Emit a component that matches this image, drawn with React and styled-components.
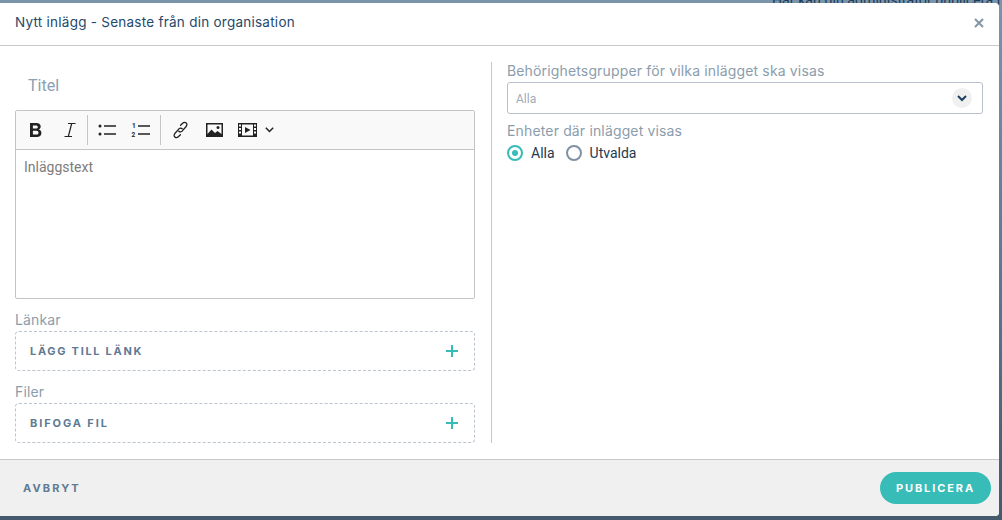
import React from 'react';
import styled, { createGlobalStyle } from 'styled-components';

const GlobalStyle = createGlobalStyle`
  html, body {
    margin: 0;
    padding: 0;
    height: 100%;
    overflow: hidden;
  }
  body {
    font-family: "Roboto", "Liberation Sans", sans-serif;
  }
`;

const Backdrop = styled.div`
  height: 520px;
  width: 1002px;
  overflow: hidden;
  background: linear-gradient(180deg, #7a94aa 0%, #5f7a90 50%, #44596c 100%);
`;

const BehindText = styled.div`
  padding-left: 772px;
  margin-top: -8px;
  height: 11px;
  font-size: 14.2px;
  line-height: 16px;
  white-space: nowrap;
  color: #1d3c58;
`;

const Modal = styled.div`
  position: absolute;
  left: 0;
  top: 3px;
  width: 999px;
  height: 513px;
  display: flex;
  flex-direction: column;
  background: #fff;
  border-radius: 0 4px 4px 0;
  overflow: hidden;
`;

const Header = styled.header`
  height: 42px;
  flex: none;
  display: flex;
  align-items: center;
  justify-content: space-between;
  padding: 0 13px 0 15px;
  border-bottom: 1px solid #c9c9c9;
`;

const Heading = styled.h1`
  margin: 0 0 4px;
  font-family: "Inter", sans-serif;
  font-size: 13.5px;
  font-weight: 400;
  letter-spacing: 0.25px;
  color: #24496a;
`;

const CloseButton = styled.button`
  border: 0;
  padding: 0 0 2px;
  background: none;
  display: flex;
  color: #8495a5;
`;

const Body = styled.div`
  flex: 1;
  min-height: 0;
  display: flex;
  padding: 16px 16px 16px 15px;
`;

const LeftColumn = styled.div`
  width: 460px;
  padding-right: 16px;
  border-right: 1px solid #c4c9ce;
`;

const RightColumn = styled.div`
  flex: 1;
  padding: 1px 0 0 15px;
`;

const TitleInput = styled.div`
  height: 46px;
  padding: 0 0 2px 13px;
  display: flex;
  align-items: center;
  font-size: 16px;
  color: #8aa0b4;
`;

const Editor = styled.div`
  height: 187px;
  border: 1px solid #c4c4c4;
  border-radius: 2px;
`;

const Toolbar = styled.div`
  height: 38px;
  display: flex;
  align-items: center;
  padding-left: 2px;
  background: #f9f9f9;
  border-bottom: 1px solid #c4c4c4;
`;

const ToolIcon = styled.span`
  width: ${p => p.$w}px;
  height: 38px;
  display: flex;
  align-items: center;
  justify-content: center;
  color: #222;
`;

const ToolDivider = styled.span`
  width: 1px;
  height: 30px;
  margin-left: ${p => p.$left || 0}px;
  background: #c4c4c4;
`;

const EditorText = styled.div`
  padding: 9px 8px;
  font-size: 14px;
  line-height: 17px;
  color: #7d7d7d;
`;

const FieldLabel = styled.div`
  font-family: "Inter", sans-serif;
  font-size: 14px;
  line-height: 16px;
  letter-spacing: 0.15px;
  color: #8b9dac;
  margin-top: ${p => p.$top || 0}px;
`;

const AddBox = styled.div`
  height: 38px;
  margin-top: 3px;
  display: flex;
  align-items: center;
  justify-content: space-between;
  padding: 0 15px 0 14px;
  border: 1px dashed #bcc5cd;
  border-radius: 4px;
`;

const ActionLabel = styled.span`
  font-family: "Inter", sans-serif;
  font-size: 11px;
  font-weight: 700;
  letter-spacing: ${p => p.$spacing || 1.7}px;
  color: #5f7a93;
`;

const PlusIcon = styled.svg`
  width: 14px;
  height: 14px;
  display: block;
`;

const Select = styled.div`
  height: 30px;
  margin-top: 3px;
  display: flex;
  align-items: center;
  justify-content: space-between;
  padding: 0 10px 0 8px;
  border: 1px solid #b5c0cb;
  border-radius: 3px;
`;

const SelectValue = styled.span`
  padding-top: 2px;
  font-size: 12px;
  color: #a0acb8;
`;

const SelectArrow = styled.span`
  width: 20px;
  height: 20px;
  border-radius: 50%;
  background: #f0f0f0;
  display: flex;
  align-items: center;
  justify-content: center;
`;

const RadioRow = styled.div`
  display: flex;
  align-items: center;
  gap: 11px;
  margin-top: 6px;
`;

const RadioOption = styled.label`
  display: flex;
  align-items: center;
  gap: 8px;
  font-size: 14px;
  line-height: 16px;
  color: #243a50;
`;

const RadioDot = styled.span`
  width: 12px;
  height: 12px;
  border-radius: 50%;
  border: 2px solid ${p => (p.$checked ? '#37bcb8' : '#7f91a2')};
  display: flex;
  align-items: center;
  justify-content: center;

  &::after {
    content: '';
    width: 6px;
    height: 6px;
    border-radius: 50%;
    background: ${p => (p.$checked ? '#37bcb8' : 'transparent')};
  }
`;

const Footer = styled.footer`
  flex: none;
  height: 55px;
  display: flex;
  align-items: center;
  justify-content: space-between;
  padding: 0 8px 1px 23px;
  background: #f0f0f0;
  border-top: 1px solid #c9c9c9;
`;

const PublishButton = styled.button`
  width: 111px;
  height: 32px;
  border: 0;
  border-radius: 16px;
  background: #37bcb8;
  font-family: "Inter", sans-serif;
  font-size: 11px;
  font-weight: 700;
  letter-spacing: 1.9px;
  color: #fff;
`;

const Plus = () => (
  <PlusIcon viewBox="0 0 14 14" fill="none" stroke="#37bcb8" strokeWidth="2">
    <path d="M7 1v12M1 7h12" />
  </PlusIcon>
);

const App = () => {
  return (
    <>
      <GlobalStyle />
      <Backdrop>
        <BehindText>Här kan din administratör publicera i</BehindText>
        <Modal>
          <Header>
            <Heading>Nytt inlägg - Senaste från din organisation</Heading>
            <CloseButton aria-label="Stäng">
              <svg width="14" height="14" viewBox="0 0 14 14" fill="none" stroke="currentColor" strokeWidth="2">
                <path d="M3 3l8 8M11 3l-8 8" />
              </svg>
            </CloseButton>
          </Header>
          <Body>
            <LeftColumn>
              <TitleInput>Titel</TitleInput>
              <Editor>
                <Toolbar>
                  <ToolIcon $w={35}>
                    <svg width="16" height="16" viewBox="0 0 16 16" fill="currentColor">
                      <path fillRule="evenodd" d="M2 1h6.500c2.600 0 4.200 1.400 4.200 3.600 0 1.400-.7 2.400-1.900 2.900 1.600.5 2.600 1.700 2.600 3.400 0 2.500-1.800 4.100-4.700 4.100H2V1zm2.900 2.400v3.100h3.100c1.100 0 1.800-.6 1.800-1.600s-.7-1.500-1.800-1.500H4.900zm0 5.400v3.800h3.500c1.300 0 2.100-.7 2.100-1.900s-.8-1.900-2.100-1.900H4.900z" />
                    </svg>
                  </ToolIcon>
                  <ToolIcon $w={34}>
                    <svg width="14" height="16" viewBox="0 0 14 16" fill="none" stroke="currentColor" strokeWidth="1.200">
                      <path d="M5 1.500h7.500M1.500 14.500h7.500M8.700 1.500l-3.400 13" />
                    </svg>
                  </ToolIcon>
                  <ToolDivider />
                  <ToolIcon $w={38}>
                    <svg width="18" height="14" viewBox="0 0 18 14" fill="currentColor">
                      <circle cx="2" cy="3" r="1.500" />
                      <circle cx="2" cy="11" r="1.500" />
                      <path d="M6 2.300h12v1.400H6zM6 10.300h12v1.400H6z" />
                    </svg>
                  </ToolIcon>
                  <ToolIcon $w={28}>
                    <svg width="19" height="16" viewBox="0 0 19 16" fill="currentColor">
                      <path d="M7 3.300h12v1.400H7zM7 11.300h12v1.400H7z" />
                      <text x="1" y="6" fontSize="6.500" fontFamily="Roboto" fontWeight="700">1</text>
                      <text x="0.500" y="15" fontSize="6.500" fontFamily="Roboto" fontWeight="700">2</text>
                    </svg>
                  </ToolIcon>
                  <ToolDivider $left={6} />
                  <ToolIcon $w={38}>
                    <svg width="17" height="18" viewBox="0 0 17 18" fill="none" stroke="currentColor" strokeWidth="1.300" strokeLinecap="round">
                      <path d="M6.800 10.200c.9 1 2.300.9 3.300-.1l3.800-4.300c1.200-1.300 1.300-2.900.3-3.800s-2.600-.7-3.800.5L8.600 4.300" />
                      <path d="M10.200 7.800c-.9-1-2.300-.9-3.300.1l-3.800 4.300c-1.200 1.300-1.300 2.900-.3 3.800s2.600.7 3.800-.5l1.800-1.800" />
                    </svg>
                  </ToolIcon>
                  <ToolIcon $w={30}>
                    <svg width="17" height="14" viewBox="0 0 17 14">
                      <path fill="currentColor" fillRule="evenodd" d="M0 0h17v14H0zM1.500 1.500v9.500l4-4.500 3.500 3.500 2.500-2 4 3V1.500z" />
                      <circle cx="12" cy="4.500" r="1.500" fill="currentColor" />
                    </svg>
                  </ToolIcon>
                  <ToolIcon $w={36}>
                    <svg width="19" height="14" viewBox="0 0 19 14" fill="currentColor">
                      <path fillRule="evenodd" d="M0 0h19v14H0zM4 1.500v11h11v-11zM1 1.500v2h2v-2zM1 5v2h2V5zM1 8.500v2h2v-2zM16 1.500v2h2v-2zM16 5v2h2V5zM16 8.500v2h2v-2z" />
                      <path d="M7 4l5.500 3L7 10z" />
                    </svg>
                  </ToolIcon>
                  <svg width="9" height="6" viewBox="0 0 9 6" fill="none" stroke="#222" strokeWidth="1.500">
                    <path d="M.8.800l3.700 3.700L8.200.8" />
                  </svg>
                </Toolbar>
                <EditorText>Inläggstext</EditorText>
              </Editor>
              <FieldLabel $top={13}>Länkar</FieldLabel>
              <AddBox>
                <ActionLabel>LÄGG TILL LÄNK</ActionLabel>
                <Plus />
              </AddBox>
              <FieldLabel $top={13}>Filer</FieldLabel>
              <AddBox>
                <ActionLabel $spacing={1.9}>BIFOGA FIL</ActionLabel>
                <Plus />
              </AddBox>
            </LeftColumn>
            <RightColumn>
              <FieldLabel>Behörighetsgrupper för vilka inlägget ska visas</FieldLabel>
              <Select>
                <SelectValue>Alla</SelectValue>
                <SelectArrow>
                  <svg width="10" height="7" viewBox="0 0 10 7" fill="none" stroke="#1d4060" strokeWidth="2">
                    <path d="M1 1l4 4 4-4" />
                  </svg>
                </SelectArrow>
              </Select>
              <FieldLabel $top={9}>Enheter där inlägget visas</FieldLabel>
              <RadioRow>
                <RadioOption><RadioDot $checked />Alla</RadioOption>
                <RadioOption><RadioDot />Utvalda</RadioOption>
              </RadioRow>
            </RightColumn>
          </Body>
          <Footer>
            <ActionLabel $spacing={2.1}>AVBRYT</ActionLabel>
            <PublishButton>PUBLICERA</PublishButton>
          </Footer>
        </Modal>
      </Backdrop>
    </>
  );
};

export default App;
